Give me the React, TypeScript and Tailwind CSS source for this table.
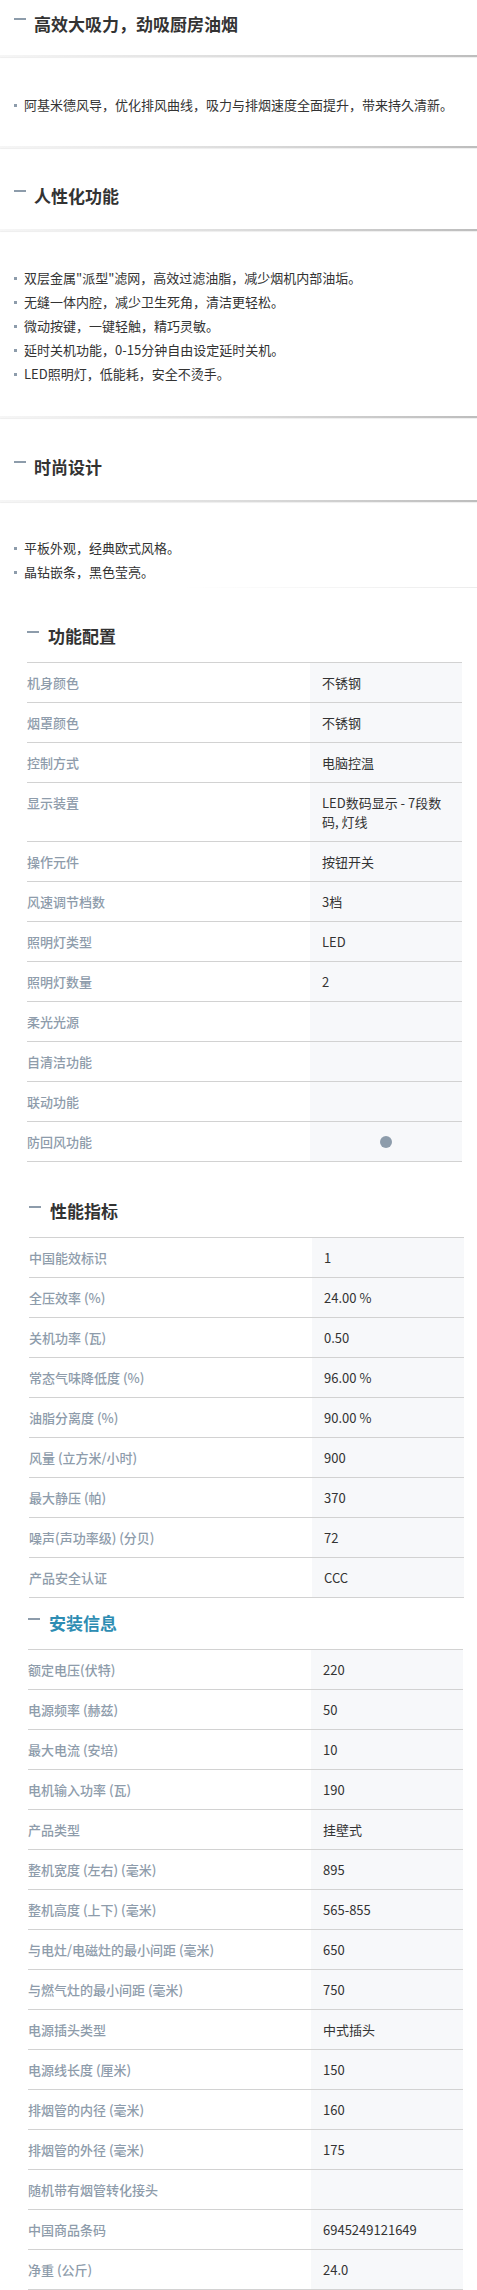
import React from 'react';

type Row = { label: string; value?: string; dot?: boolean };

const config: Row[] = [
  { label: '机身颜色', value: '不锈钢' },
  { label: '烟罩颜色', value: '不锈钢' },
  { label: '控制方式', value: '电脑控温' },
  { label: '显示装置', value: 'LED数码显示 - 7段数码, 灯线' },
  { label: '操作元件', value: '按钮开关' },
  { label: '风速调节档数', value: '3档' },
  { label: '照明灯类型', value: 'LED' },
  { label: '照明灯数量', value: '2' },
  { label: '柔光光源' },
  { label: '自清洁功能' },
  { label: '联动功能' },
  { label: '防回风功能', dot: true },
];

const perf: Row[] = [
  { label: '中国能效标识', value: '1' },
  { label: '全压效率 (%)', value: '24.00 %' },
  { label: '关机功率 (瓦)', value: '0.50' },
  { label: '常态气味降低度 (%)', value: '96.00 %' },
  { label: '油脂分离度 (%)', value: '90.00 %' },
  { label: '风量 (立方米/小时)', value: '900' },
  { label: '最大静压 (帕)', value: '370' },
  { label: '噪声(声功率级) (分贝)', value: '72' },
  { label: '产品安全认证', value: 'CCC' },
];

const install: Row[] = [
  { label: '额定电压(伏特)', value: '220' },
  { label: '电源频率 (赫兹)', value: '50' },
  { label: '最大电流 (安培)', value: '10' },
  { label: '电机输入功率 (瓦)', value: '190' },
  { label: '产品类型', value: '挂壁式' },
  { label: '整机宽度 (左右) (毫米)', value: '895' },
  { label: '整机高度 (上下) (毫米)', value: '565-855' },
  { label: '与电灶/电磁灶的最小间距 (毫米)', value: '650' },
  { label: '与燃气灶的最小间距 (毫米)', value: '750' },
  { label: '电源插头类型', value: '中式插头' },
  { label: '电源线长度 (厘米)', value: '150' },
  { label: '排烟管的内径 (毫米)', value: '160' },
  { label: '排烟管的外径 (毫米)', value: '175' },
  { label: '随机带有烟管转化接头' },
  { label: '中国商品条码', value: '6945249121649' },
  { label: '净重 (公斤)', value: '24.0' },
];

function Divider() {
  return (
    <div className="h-[2px] bg-linear-to-r from-[#f6f6f6] via-[#dcdcdc] to-[#bdbdbd] shadow-[0_1px_1px_rgba(0,0,0,0.07)]" />
  );
}

function FeatureTitle({ text }: { text: string }) {
  return (
    <div className="flex items-start h-6 pl-[14px]">
      <span className="mt-[6px] w-3 h-[2px] bg-[#8d9cab] mr-2" />
      <h2 className="text-[17px] leading-6 font-bold text-[#333]">{text}</h2>
    </div>
  );
}

function Bullets({ items }: { items: string[] }) {
  return (
    <ul>
      {items.map((t) => (
        <li key={t} className="flex items-center h-6 text-[13px] text-[#333]">
          <span className="ml-[14px] mr-[7px] w-[3px] h-[3px] bg-[#8d9cab]" />
          {t}
        </li>
      ))}
    </ul>
  );
}

function SpecTable({
  title,
  rows,
  left,
  titleColor = 'text-[#333]',
}: {
  title: string;
  rows: Row[];
  left: string;
  titleColor?: string;
}) {
  return (
    <section className={left}>
      <div className="flex items-start h-6">
        <span className="mt-[7px] w-3 h-[2px] bg-[#8d9cab] mr-[9px]" />
        <h2 className={`text-[17px] leading-6 font-bold ${titleColor}`}>{title}</h2>
      </div>
      <div className="mt-[14px] w-[435px] border-t border-[#d2d2d2]">
        {rows.map((r) => (
          <div key={r.label} className="flex border-b border-[#d2d2d2] text-[13px] leading-[19px]">
            <div className="w-[283px] py-[10px] font-medium text-[#8e9cab]">{r.label}</div>
            <div className="flex-1 bg-[#f7f8fa] py-[10px] pl-3 pr-3 text-[#333]">
              {r.dot ? (
                <div className="flex justify-center items-center h-[19px]">
                  <span className="w-3 h-3 rounded-full bg-[#8d9cab]" />
                </div>
              ) : (
                r.value
              )}
            </div>
          </div>
        ))}
      </div>
    </section>
  );
}

export default function App() {
  return (
    <main className="w-[477px] bg-white font-['Noto_Sans_CJK_SC','Noto_Sans',sans-serif] overflow-hidden">
      {/* 卖点 1 */}
      <div className="pt-[12px]">
        <FeatureTitle text="高效大吸力，劲吸厨房油烟" />
        <div className="mt-[19px]"><Divider /></div>
        <div className="mt-[36px]">
          <Bullets items={['阿基米德风导，优化排风曲线，吸力与排烟速度全面提升，带来持久清新。']} />
        </div>
        <div className="mt-[29px]"><Divider /></div>
      </div>

      {/* 卖点 2 */}
      <div className="pt-[36px]">
        <FeatureTitle text="人性化功能" />
        <div className="mt-[21px]"><Divider /></div>
        <div className="mt-[35px]">
          <Bullets
            items={[
              '双层金属"派型"滤网，高效过滤油脂，减少烟机内部油垢。',
              '无缝一体内腔，减少卫生死角，清洁更轻松。',
              '微动按键，一键轻触，精巧灵敏。',
              '延时关机功能，0-15分钟自由设定延时关机。',
              'LED照明灯，低能耗，安全不烫手。',
            ]}
          />
        </div>
        <div className="mt-[30px]"><Divider /></div>
      </div>

      {/* 卖点 3 */}
      <div className="pt-[37px]">
        <FeatureTitle text="时尚设计" />
        <div className="mt-[21px]"><Divider /></div>
        <div className="mt-[34px]">
          <Bullets items={['平板外观，经典欧式风格。', '晶钻嵌条，黑色莹亮。']} />
        </div>
        <div className="mt-[3px] ml-[180px] h-px bg-linear-to-r from-white to-[#ececec]" />
      </div>

      <div className="pt-[36px]">
        <SpecTable title="功能配置" rows={config} left="ml-[27px]" />
      </div>
      <div className="pt-[37px]">
        <SpecTable title="性能指标" rows={perf} left="ml-[29px]" />
      </div>
      <div className="pt-[13px]">
        <SpecTable title="安装信息" rows={install} left="ml-[28px]" titleColor="text-[#2e8db3]" />
      </div>
    </main>
  );
}
